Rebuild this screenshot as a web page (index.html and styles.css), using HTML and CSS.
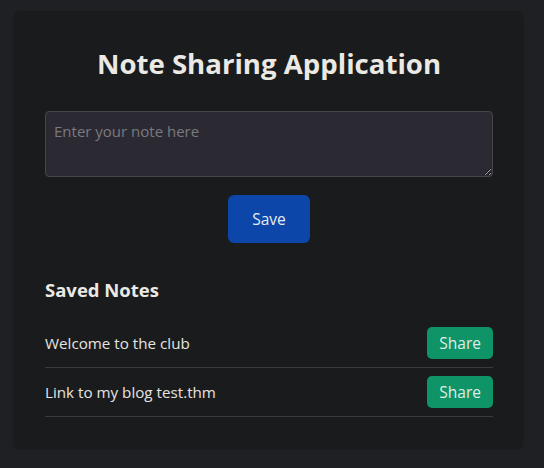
FILE: index.html
```html
<!DOCTYPE html>
<html>
<head>
<meta charset="utf-8">
<link rel="stylesheet" href="styles.css">
</head>
<body>
<div class="card">
  <h1 class="title">Note Sharing Application</h1>
  <textarea class="note-input" placeholder="Enter your note here"></textarea>
  <div class="actions"><button class="btn btn-save">Save</button></div>
  <h2 class="subtitle">Saved Notes</h2>
  <ul class="notes">
    <li class="note"><span class="note-text">Welcome to the club</span><button class="btn btn-share">Share</button></li>
    <li class="note"><span class="note-text">Link to my blog test.thm</span><button class="btn btn-share">Share</button></li>
  </ul>
</div>
</body>
</html>
```

FILE: styles.css
```css
html, body {
  margin: 0;
  padding: 0;
  background: #1f2023;
  height: 100%;
}
body {
  padding: 11px 20px 0 13px;
  box-sizing: border-box;
  font-family: "Open Sans", "Noto Sans", sans-serif;
  color: #e6e4e0;
}
.card {
  background: #1a1b1d;
  border-radius: 8px;
  padding: 32px 31px 33px 32px;
}
.title {
  margin: 0 0 28px;
  text-align: center;
  font-size: 27.6px;
  line-height: 40px;
  font-weight: 700;
  color: #ebe9e4;
}
.note-input {
  display: block;
  width: 100%;
  box-sizing: border-box;
  height: 66px;
  background: #2b2a33;
  border: 1px solid #45454c;
  border-radius: 4px;
  padding: 9px 8px;
  font-family: inherit;
  font-size: 15px;
  color: #e6e4e0;
  resize: vertical;
}
.note-input::placeholder { color: #7a7980; }
.actions {
  display: flex;
  justify-content: center;
  margin-top: 18px;
}
.btn {
  border: none;
  font-family: inherit;
  font-size: 15.5px;
  color: #e8ecf2;
  cursor: pointer;
}
.btn-save {
  width: 82px;
  height: 48px;
  border-radius: 6px;
  background: #0b46a8;
}
.subtitle {
  margin: 34px 0 16px;
  font-size: 18.5px;
  line-height: 26px;
  font-weight: 700;
  color: #ebe9e4;
}
.notes {
  list-style: none;
  margin: 0;
  padding: 0;
}
.note {
  display: flex;
  align-items: center;
  justify-content: space-between;
  padding: 8px 0;
  border-bottom: 1px solid #3a3b3e;
}
.note-text {
  font-size: 15.2px;
}
.btn-share {
  background: #0f9467;
  height: 32px;
  padding: 0 12px;
  border-radius: 5px;
  color: #dfeee7;
}
```
